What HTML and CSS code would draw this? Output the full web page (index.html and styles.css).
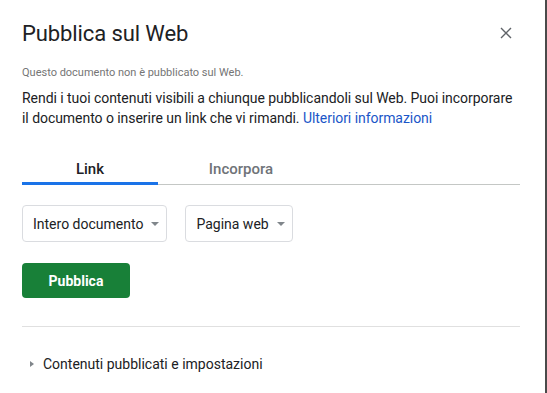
FILE: index.html
```html
<!DOCTYPE html>
<html lang="it">
  <head>
    <meta charset="UTF-8" />
    <meta name="viewport" content="width=device-width, initial-scale=1.0" />
    <title>Pubblica sul Web</title>
    <link rel="stylesheet" href="styles.css">
  </head>
  <body>
    <div class="dialog">
      <div class="header">
        <h2>Pubblica sul Web</h2>
        <button class="close" aria-label="Chiudi">
          <svg width="12" height="12" viewBox="0 0 12 12">
            <path d="M1 1L11 11M11 1L1 11" stroke="#5f6368" stroke-width="1.4" fill="none" />
          </svg>
        </button>
      </div>

      <p class="status">Questo documento non è pubblicato sul Web.</p>
      <p class="intro">
        Rendi i tuoi contenuti visibili a chiunque pubblicandoli sul Web. Puoi incorporare
        il documento o inserire un link che vi rimandi. <a href="#">Ulteriori informazioni</a>
      </p>

      <div class="tabs">
        <div class="tab active">Link</div>
        <div class="tab">Incorpora</div>
      </div>

      <div class="selects">
        <div class="select">Intero documento <span class="caret"></span></div>
        <div class="select">Pagina web <span class="caret"></span></div>
      </div>

      <button class="publish">Pubblica</button>

      <div class="divider"></div>

      <div class="details">
        <span class="arrow"></span>
        Contenuti pubblicati e impostazioni
      </div>
    </div>
  </body>
</html>
```

FILE: styles.css
```css
* {
  margin: 0;
  padding: 0;
  box-sizing: border-box;
}

body {
  font-family: Roboto, Arial, sans-serif;
  background-color: #fff;
  color: #202124;
  width: 547px;
  height: 393px;
  overflow: hidden;
}

.dialog {
  width: 547px;
  height: 393px;
  padding: 0 25px 0 22px;
  border-right: 2px solid #4a4a4a;
}

.header {
  display: flex;
  justify-content: space-between;
  align-items: center;
  height: 66px;
}

.header h2 {
  font-size: 22px;
  font-weight: 400;
  color: #202124;
  letter-spacing: -0.1px;
}

.close {
  border: none;
  background: none;
  width: 12px;
  height: 12px;
  margin-right: 8px;
  display: flex;
}

.status {
  font-size: 11px;
  color: #757575;
  line-height: 14px;
}

.intro {
  font-size: 14px;
  line-height: 20px;
  margin-top: 8px;
  color: #202124;
  letter-spacing: -0.05px;
}

.intro a {
  color: #1a56c8;
  text-decoration: none;
}

.tabs {
  display: flex;
  margin-top: 24px;
  border-bottom: 1px solid #c4c7c5;
  height: 33px;
}

.tab {
  width: 166px;
  text-align: center;
  font-size: 15px;
  font-weight: 500;
  color: #6f7378;
  padding-top: 8px;
}

.tab.active {
  width: 136px;
  color: #202124;
  border-bottom: 3px solid #1a73e8;
  height: 33px;
}

.selects {
  display: flex;
  gap: 18px;
  margin-top: 20px;
}

.select {
  display: flex;
  align-items: center;
  height: 37px;
  padding: 0 7px 0 10px;
  border: 1px solid #dadce0;
  border-radius: 4px;
  font-size: 14px;
  color: #202124;
}

.caret {
  width: 0;
  height: 0;
  margin-left: 8px;
  border-left: 4px solid transparent;
  border-right: 4px solid transparent;
  border-top: 4px solid #80868b;
}

.publish {
  display: block;
  margin-top: 21px;
  width: 108px;
  height: 35px;
  border: none;
  border-radius: 4px;
  background-color: #188038;
  color: #fff;
  font-family: Roboto, Arial, sans-serif;
  font-size: 14px;
  font-weight: 700;
}

.divider {
  margin-top: 28px;
  border-top: 1px solid #e0e0e0;
}

.details {
  display: flex;
  align-items: center;
  margin-top: 29px;
  padding-left: 8px;
  font-size: 14px;
  color: #202124;
}

.arrow {
  width: 0;
  height: 0;
  margin-right: 9px;
  border-top: 3px solid transparent;
  border-bottom: 3px solid transparent;
  border-left: 4px solid #80868b;
}
```
